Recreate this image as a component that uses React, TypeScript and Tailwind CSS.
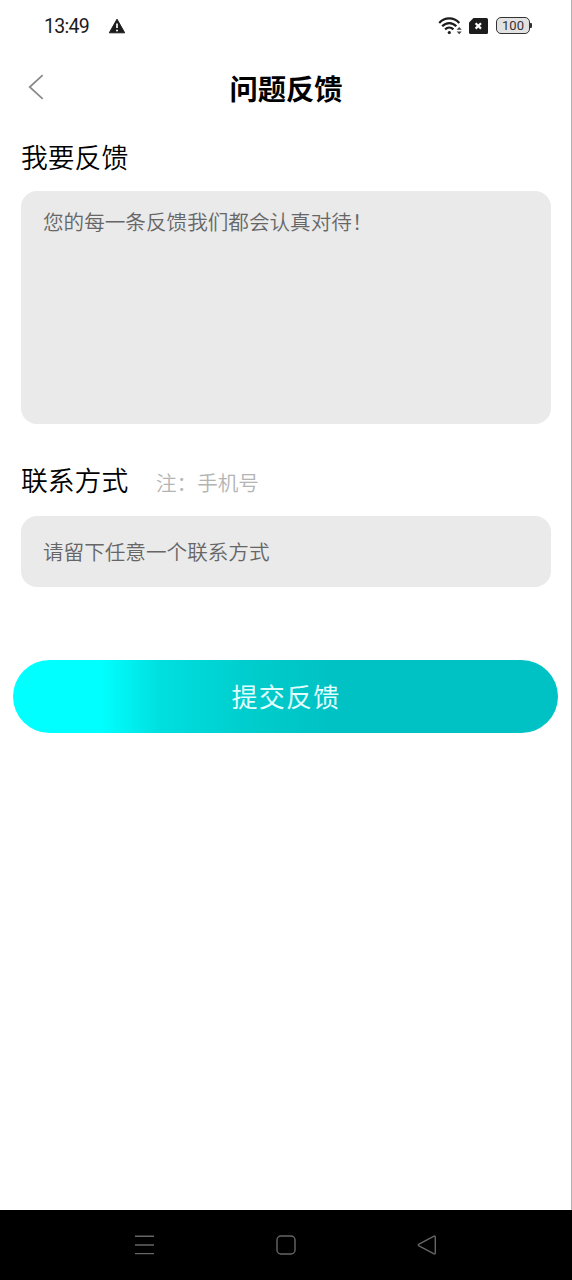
import React from "react";

function StatusBar() {
  return (
    <div className="flex h-[52px] items-center justify-between pl-[44px] pr-[39px] text-[#1c1c1c]">
      <div className="flex items-center">
        <span className="w-[64px] pt-[2px] font-['Roboto','Inter',sans-serif] text-[19.5px] leading-[24px] tracking-[-0.7px]">13:49</span>
        <svg width="18" height="16" viewBox="0 0 18 16" aria-label="警告">
          <path d="M9 1.2 16.7 14.8H1.3Z" fill="#1c1c1c" stroke="#1c1c1c" strokeWidth="1" strokeLinejoin="round" />
          <path d="M9 5.4V10" stroke="#fff" strokeWidth="1.7" />
          <circle cx="9" cy="12.4" r="1" fill="#fff" />
        </svg>
      </div>
      <div className="flex items-center pb-[1px]">
        <svg width="25" height="20" viewBox="0 0 25 20" fill="none" stroke="#1c1c1c" strokeWidth="2.2">
          <path d="M1.2 6.9C6.8.9 15.7.9 21.3 6.9" />
          <path d="M4.2 10.3C8.3 6 14.2 6 18.3 10.3" />
          <path d="M7.1 13.4C9.6 10.9 12.9 10.9 15.4 13.4" />
          <circle cx="11.3" cy="16.5" r="1.6" fill="#1c1c1c" stroke="none" />
          <path d="M18.6 13.7 21.2 11l2.6 2.7ZM18.6 15.6l2.6 2.7 2.6-2.7Z" fill="#444" stroke="none" />
        </svg>
        <svg className="ml-[5px]" width="21" height="18" viewBox="0 0 21 18">
          <path d="M5.5 1H18.5Q20 1 20 2.5V15.5Q20 17 18.5 17H2.5Q1 17 1 15.5V5.5Z" fill="#1c1c1c" />
          <path d="m7.6 6.2 5.4 5.4m0-5.4-5.4 5.4" stroke="#fff" strokeWidth="2.2" />
        </svg>
        <div className="ml-[7px] flex h-[17px] w-[34px] items-center justify-center rounded-[5px] border-[1.5px] border-[#333] bg-[#e2e2e2] pt-[1px] font-['Roboto',sans-serif] text-[13px] leading-[14px] text-[#333]">
          100
        </div>
        <div className="h-[5px] w-[2px] rounded-r-[1px] bg-[#333]" />
      </div>
    </div>
  );
}

function NavigationBar() {
  return (
    <div className="flex h-[70px] items-center justify-between bg-black pl-[134px] pr-[135px]">
      <svg width="21" height="22" viewBox="0 0 21 22" stroke="#666" strokeWidth="1.4">
        <path d="M1 2.2H20M1 11H20M1 19.6H20" />
      </svg>
      <svg width="20" height="20" viewBox="0 0 20 20" fill="none" stroke="#666" strokeWidth="1.4">
        <rect x="1" y="1" width="18" height="18" rx="4" />
      </svg>
      <svg width="20" height="20" viewBox="0 0 20 20" fill="none" stroke="#666" strokeWidth="1.4" strokeLinejoin="round">
        <path d="M2 9.1 16.6 1.3Q18.3.5 18.3 2.2V17.8Q18.3 19.5 16.6 18.7L2 10.9Q.6 10 2 9.1Z" />
      </svg>
    </div>
  );
}

export default function App() {
  return (
    <div className="flex h-[1280px] w-[572px] flex-col bg-white font-['Noto_Sans_CJK_SC',sans-serif]">
      <div className="flex flex-1 flex-col border-r border-[#b2b2b2]">
        <StatusBar />
        <header className="grid h-[70px] grid-cols-[44px_1fr_43px] items-center">
          <button className="flex justify-end" aria-label="返回">
            <svg width="16" height="26" viewBox="0 0 16 26" fill="none" stroke="#888" strokeWidth="1.7">
              <path d="M14.7 1.2 1.7 13l13 11.8" />
            </svg>
          </button>
          <h1 className="pt-[1px] text-center text-[28.3px] font-bold leading-[40px] text-black">问题反馈</h1>
        </header>
        <main className="flex flex-col pl-[21px] pr-[20px]">
          <h2 className="mt-[15px] h-[54px] text-[26.8px] font-[350] leading-[40px] text-black">我要反馈</h2>
          <div className="h-[233px] rounded-[16px] bg-[#eaeaea] px-[22px] pt-[15px] text-[20.6px] font-[350] leading-[30px] text-[#666]">
            您的每一条反馈我们都会认真对待！
          </div>
          <div className="mt-[36px] flex h-[56px] items-start">
            <h2 className="w-[134px] text-[26.8px] font-[350] leading-[40px] text-black">联系方式</h2>
            <span className="pl-[1px] pt-[2px] text-[20.6px] font-[350] leading-[40px] text-[#b4b4b4]">注：手机号</span>
          </div>
          <div className="flex h-[71px] items-center rounded-[16px] bg-[#eaeaea] px-[22px] pb-[1px] text-[20.6px] font-[350] leading-[30px] text-[#666]">
            请留下任意一个联系方式
          </div>
        </main>
        <button className="ml-[13px] mt-[73px] h-[73px] w-[545px] rounded-full bg-[linear-gradient(90deg,#00ffff_0%,#00ffff_16%,#00dfdf_27%,#00cdcd_43%,#00c2c4_58%,#00c2c4_100%)] pb-[2px] pl-[1px] text-[26px] leading-[40px] tracking-[1.2px] text-[#e2ffff]">
          提交反馈
        </button>
      </div>
      <NavigationBar />
    </div>
  );
}
